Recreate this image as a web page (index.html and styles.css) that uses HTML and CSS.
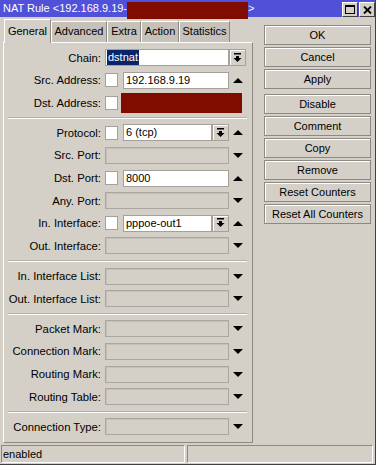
FILE: index.html
```html
<!DOCTYPE html>
<html lang="en">
<head>
    <meta charset="UTF-8">
    <title>NAT Rule</title>
    <link rel="stylesheet" href="styles.css">
</head>
<body>
    <div class="window">
        <div class="titlebar">
            <span class="title">NAT Rule &lt;192.168.9.19-</span><span class="redact title-redact"></span><span class="title">&gt;</span>
            <div class="wincontrols">
                <span class="winbtn"><svg width="10" height="9" viewBox="0 0 10 9"><rect x="0.5" y="0.5" width="9" height="8" fill="none" stroke="#000"/><rect x="0" y="0" width="10" height="2" fill="#000"/></svg></span>
                <span class="winbtn"><svg width="9" height="8" viewBox="0 0 9 8"><path d="M1 0.5 L8 7.5 M8 0.5 L1 7.5" stroke="#000" stroke-width="1.8"/></svg></span>
            </div>
        </div>
        <div class="main">
            <div class="editor">
                <div class="tabs">
                    <div class="tab active" style="width:47px">General</div>
                    <div class="tab" style="width:56px">Advanced</div>
                    <div class="tab" style="width:34px">Extra</div>
                    <div class="tab" style="width:38px">Action</div>
                    <div class="tab" style="width:51px">Statistics</div>
                </div>
                <div class="panel">
                    <div class="row">
                        <span class="label">Chain:</span>
                        <div class="ctl">
                            <div class="input"><span class="selected">dstnat</span></div>
                            <span class="dd"><svg width="9" height="10" viewBox="0 0 9 10"><rect x="1" y="0" width="7" height="1.5"/><rect x="3" y="3" width="3" height="2"/><path d="M0.5 5 H8.5 L4.5 9 Z"/></svg></span>
                        </div>
                    </div>
                    <div class="row">
                        <span class="label">Src. Address:</span>
                        <div class="ctl">
                            <span class="check"></span>
                            <div class="input">192.168.9.19</div>
                            <span class="arrow"><svg width="10" height="5" viewBox="0 0 10 5"><path d="M0 5 L5 0 L10 5 Z"/></svg></span>
                        </div>
                    </div>
                    <div class="row">
                        <span class="label">Dst. Address:</span>
                        <div class="ctl">
                            <span class="check"></span>
                            <span class="redact field-redact"></span>
                        </div>
                    </div>
                    <div class="sep"></div>
                    <div class="row">
                        <span class="label">Protocol:</span>
                        <div class="ctl">
                            <span class="check"></span>
                            <div class="input">6 (tcp)</div>
                            <span class="dd"><svg width="9" height="10" viewBox="0 0 9 10"><rect x="1" y="0" width="7" height="1.5"/><rect x="3" y="3" width="3" height="2"/><path d="M0.5 5 H8.5 L4.5 9 Z"/></svg></span>
                            <span class="arrow"><svg width="10" height="5" viewBox="0 0 10 5"><path d="M0 5 L5 0 L10 5 Z"/></svg></span>
                        </div>
                    </div>
                    <div class="row">
                        <span class="label">Src. Port:</span>
                        <div class="ctl">
                            <div class="input disabled"></div>
                            <span class="arrow"><svg width="10" height="5" viewBox="0 0 10 5"><path d="M0 0 L10 0 L5 5 Z"/></svg></span>
                        </div>
                    </div>
                    <div class="row">
                        <span class="label">Dst. Port:</span>
                        <div class="ctl">
                            <span class="check"></span>
                            <div class="input">8000</div>
                            <span class="arrow"><svg width="10" height="5" viewBox="0 0 10 5"><path d="M0 5 L5 0 L10 5 Z"/></svg></span>
                        </div>
                    </div>
                    <div class="row">
                        <span class="label">Any. Port:</span>
                        <div class="ctl">
                            <div class="input disabled"></div>
                            <span class="arrow"><svg width="10" height="5" viewBox="0 0 10 5"><path d="M0 0 L10 0 L5 5 Z"/></svg></span>
                        </div>
                    </div>
                    <div class="row">
                        <span class="label">In. Interface:</span>
                        <div class="ctl">
                            <span class="check"></span>
                            <div class="input">pppoe-out1</div>
                            <span class="dd"><svg width="9" height="10" viewBox="0 0 9 10"><rect x="1" y="0" width="7" height="1.5"/><rect x="3" y="3" width="3" height="2"/><path d="M0.5 5 H8.5 L4.5 9 Z"/></svg></span>
                            <span class="arrow"><svg width="10" height="5" viewBox="0 0 10 5"><path d="M0 5 L5 0 L10 5 Z"/></svg></span>
                        </div>
                    </div>
                    <div class="row">
                        <span class="label">Out. Interface:</span>
                        <div class="ctl">
                            <div class="input disabled"></div>
                            <span class="arrow"><svg width="10" height="5" viewBox="0 0 10 5"><path d="M0 0 L10 0 L5 5 Z"/></svg></span>
                        </div>
                    </div>
                    <div class="sep"></div>
                    <div class="row">
                        <span class="label">In. Interface List:</span>
                        <div class="ctl">
                            <div class="input disabled"></div>
                            <span class="arrow"><svg width="10" height="5" viewBox="0 0 10 5"><path d="M0 0 L10 0 L5 5 Z"/></svg></span>
                        </div>
                    </div>
                    <div class="row">
                        <span class="label">Out. Interface List:</span>
                        <div class="ctl">
                            <div class="input disabled"></div>
                            <span class="arrow"><svg width="10" height="5" viewBox="0 0 10 5"><path d="M0 0 L10 0 L5 5 Z"/></svg></span>
                        </div>
                    </div>
                    <div class="sep"></div>
                    <div class="row">
                        <span class="label">Packet Mark:</span>
                        <div class="ctl">
                            <div class="input disabled"></div>
                            <span class="arrow"><svg width="10" height="5" viewBox="0 0 10 5"><path d="M0 0 L10 0 L5 5 Z"/></svg></span>
                        </div>
                    </div>
                    <div class="row">
                        <span class="label">Connection Mark:</span>
                        <div class="ctl">
                            <div class="input disabled"></div>
                            <span class="arrow"><svg width="10" height="5" viewBox="0 0 10 5"><path d="M0 0 L10 0 L5 5 Z"/></svg></span>
                        </div>
                    </div>
                    <div class="row">
                        <span class="label">Routing Mark:</span>
                        <div class="ctl">
                            <div class="input disabled"></div>
                            <span class="arrow"><svg width="10" height="5" viewBox="0 0 10 5"><path d="M0 0 L10 0 L5 5 Z"/></svg></span>
                        </div>
                    </div>
                    <div class="row">
                        <span class="label">Routing Table:</span>
                        <div class="ctl">
                            <div class="input disabled"></div>
                            <span class="arrow"><svg width="10" height="5" viewBox="0 0 10 5"><path d="M0 0 L10 0 L5 5 Z"/></svg></span>
                        </div>
                    </div>
                    <div class="sep"></div>
                    <div class="row">
                        <span class="label">Connection Type:</span>
                        <div class="ctl">
                            <div class="input disabled"></div>
                            <span class="arrow"><svg width="10" height="5" viewBox="0 0 10 5"><path d="M0 0 L10 0 L5 5 Z"/></svg></span>
                        </div>
                    </div>
                </div>
            </div>
            <div class="actions">
                <div class="btn">OK</div>
                <div class="btn">Cancel</div>
                <div class="btn">Apply</div>
                <div class="btn group">Disable</div>
                <div class="btn">Comment</div>
                <div class="btn">Copy</div>
                <div class="btn">Remove</div>
                <div class="btn">Reset Counters</div>
                <div class="btn">Reset All Counters</div>
            </div>
        </div>
        <div class="statusbar">
            <div class="cell first">enabled</div>
            <div class="cell"></div>
        </div>
    </div>
</body>
</html>
```

FILE: styles.css
```css
body {
    margin: 0;
    background: #ffffff;
    font-family: "Liberation Sans", Arial, sans-serif;
    font-size: 11px;
    color: #000;
}

.window {
    width: 376px;
    height: 465px;
    box-sizing: border-box;
    background: #d4d0c8;
    border-right: 1px solid #404040;
    border-bottom: 1px solid #404040;
    display: flex;
    flex-direction: column;
}

/* title bar */
.titlebar {
    height: 17px;
    flex-shrink: 0;
    background: #5050d8;
    color: #fff;
    display: flex;
    align-items: flex-start;
    padding-left: 3px;
}
.title {
    font-size: 11px;
    line-height: 17px;
    white-space: nowrap;
}
.redact {
    background: #800c00;
    display: block;
    flex-shrink: 0;
}
.title-redact {
    width: 121px;
    height: 17px;
    margin-top: 2px;
    position: relative;
    z-index: 2;
}
.wincontrols {
    margin-left: auto;
    display: flex;
    gap: 1px;
    padding-top: 2px;
}
.winbtn {
    width: 16px;
    height: 15px;
    box-sizing: border-box;
    background: #d4d0c8;
    border: 1px solid;
    border-color: #ffffff #404040 #404040 #ffffff;
    display: flex;
    align-items: center;
    justify-content: center;
}

/* main area */
.main {
    flex: 1;
    display: flex;
}
.editor {
    margin-left: 3px;
    width: 250px;
    display: flex;
    flex-direction: column;
}
.tabs {
    display: flex;
    align-items: flex-end;
    height: 23px;
    margin-top: 2px;
    padding-left: 1px;
}
.tab {
    height: 21px;
    box-sizing: border-box;
    background: #c6c2ba;
    border: 1px solid;
    border-color: #ffffff #8c8984 transparent #ffffff;
    border-bottom: none;
    text-align: center;
    line-height: 19px;
    white-space: nowrap;
}
.tab.active {
    height: 24px;
    margin-bottom: -1px;
    background: #d4d0c8;
    line-height: 22px;
    position: relative;
    z-index: 1;
}
.panel {
    height: 401px;
    box-sizing: border-box;
    border: 1px solid;
    border-color: #ffffff #8c8984 #8c8984 #ffffff;
    padding-top: 6px;
    display: flex;
    flex-direction: column;
    gap: 5.6px;
}
.row {
    display: flex;
    align-items: center;
    height: 17px;
    flex-shrink: 0;
}
.label {
    width: 97px;
    text-align: right;
    white-space: nowrap;
    font-size: 11.3px;
}
.ctl {
    width: 141px;
    margin-left: 4px;
    display: flex;
    align-items: center;
    height: 17px;
}
.input {
    flex: 1;
    height: 17px;
    box-sizing: border-box;
    background: #fff;
    border: 1px solid #a4a09a;
    padding: 0 2px;
    line-height: 15px;
    white-space: nowrap;
    overflow: hidden;
}
.input.disabled {
    background: #d4d0c8;
    border-color: #aaa6a0;
    box-shadow: inset 1px 1px #c4c0b8;
}
.selected {
    background: #0a246a;
    color: #fff;
    display: inline-block;
    height: 15px;
    padding: 0 1px;
    margin-left: -1px;
}
.check {
    width: 13px;
    height: 14px;
    box-sizing: border-box;
    background: #fff;
    border: 1px solid #a4a09a;
    margin-right: 5px;
    flex-shrink: 0;
}
.field-redact {
    width: 121px;
    height: 20px;
    margin-left: -2px;
}
.dd {
    width: 17px;
    height: 17px;
    box-sizing: border-box;
    flex-shrink: 0;
    background: #d4d0c8;
    border: 1px solid #a4a09a;
    box-shadow: inset 1px 1px #ffffff;
    display: flex;
    align-items: center;
    justify-content: center;
}
.arrow {
    width: 17px;
    flex-shrink: 0;
    display: flex;
    align-items: center;
    justify-content: center;
}
.sep {
    height: 0;
    flex-shrink: 0;
    margin: 0 5px 0 4px;
    border-top: 1px solid #b4b0a8;
    border-bottom: 1px solid #ffffff;
}

/* buttons on the right */
.actions {
    width: 107px;
    margin-left: 11px;
    padding-top: 8px;
    display: flex;
    flex-direction: column;
    gap: 2px;
}
.btn {
    height: 20px;
    box-sizing: border-box;
    background: #d4d0c8;
    border: 1px solid #8c8984;
    box-shadow: inset 1px 1px #ffffff;
    text-align: center;
    line-height: 18px;
    white-space: nowrap;
}
.btn.group {
    margin-top: 3px;
}

/* status bar */
.statusbar {
    height: 20px;
    flex-shrink: 0;
    display: flex;
    padding: 1px 2px 1px 1px;
    box-sizing: border-box;
    gap: 2px;
}
.cell {
    flex: 1;
    border: 1px solid;
    border-color: #8c8984 #ffffff #ffffff #8c8984;
    padding-left: 1px;
    line-height: 16px;
}
.cell.first {
    flex: none;
    width: 184px;
    box-sizing: border-box;
}
```
